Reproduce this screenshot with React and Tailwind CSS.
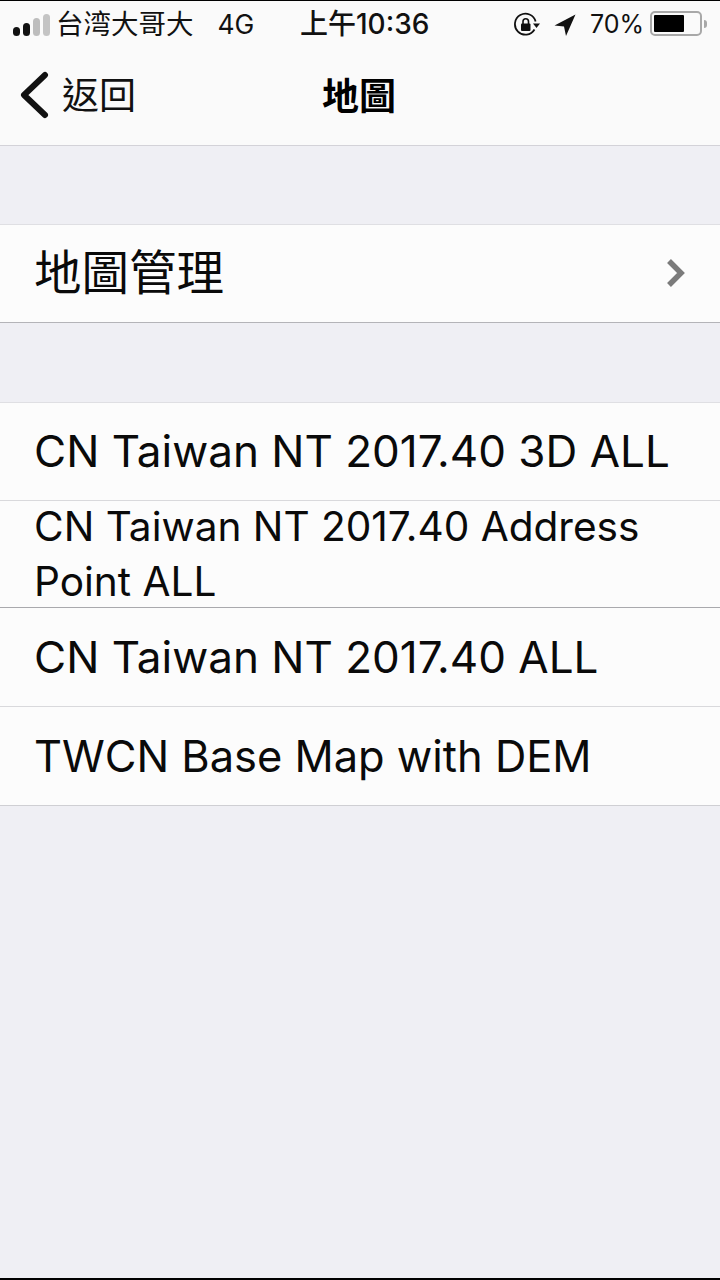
const FONT = 'font-["Inter","Noto_Sans_CJK_TC",sans-serif]';

const Signal = () => (
  <div className="flex items-end gap-[3px]">
    <span className="w-[7px] h-[9px] rounded-full bg-[#111]" />
    <span className="w-[7px] h-[13px] rounded-full bg-[#111]" />
    <span className="w-[7px] h-[18px] rounded-full bg-[#bdbdbd]" />
    <span className="w-[7px] h-[22px] rounded-full bg-[#c4c4c4]" />
  </div>
);

const RotationLock = () => (
  <svg width="27" height="26" viewBox="0 0 27 26" fill="none">
    <path d="M21.5 17.5A10.5 10.5 0 1 1 22.6 9.5" stroke="#111" strokeWidth="1.8" />
    <path d="M20 11.5h7L23.5 16z" fill="#111" />
    <rect x="8" y="11.5" width="9.5" height="7.5" rx="1" fill="#111" />
    <path d="M10 12V9.5a2.7 2.7 0 0 1 5.5 0V12" stroke="#111" strokeWidth="1.6" />
  </svg>
);

const Location = () => (
  <svg width="22" height="22" viewBox="0 0 22 22">
    <path d="M21.5 0.5 0.5 11.5 10 12.5 12 22z" fill="#111" />
  </svg>
);

const Battery = () => (
  <div className="flex items-center -translate-y-[1px]">
    <div className="w-[52px] h-[25px] rounded-[5px] border-2 border-[#a8a8a8] p-[2px]">
      <div className="w-[30px] h-full rounded-[1px] bg-black" />
    </div>
    <span className="ml-[2px] w-[3px] h-[8px] rounded-r-full bg-[#a8a8a8]" />
  </div>
);

const StatusBar = () => (
  <div className="relative h-[47px] flex items-center justify-between pl-[13px] pr-[13px] text-[#111]">
    <div className="flex items-center">
      <Signal />
      <span className="ml-[6px] text-[27.5px] leading-none">台湾大哥大</span>
      <span className="ml-[24px] text-[26.5px] leading-none">4G</span>
    </div>
    <div className="flex items-center">
      <RotationLock />
      <span className="ml-[14px]"><Location /></span>
      <span className="ml-[14px] mr-[6px] text-[25px] leading-none">70%</span>
      <Battery />
    </div>
    <span className="absolute left-[300px] top-[9px] text-[28px] leading-none font-medium">上午10:36</span>
  </div>
);

const NavBar = () => (
  <div className="relative h-[98px] flex items-center justify-center pr-[2px] border-b border-[#d3d2d8]">
    <div className="absolute left-[19px] top-[23px] flex items-center">
      <svg width="30" height="48" viewBox="0 0 30 48" fill="none">
        <path d="M26 4 5 24l21 20" stroke="#111" strokeWidth="6" strokeLinecap="round" strokeLinejoin="round" />
      </svg>
      <span className="ml-[13px] text-[37px] leading-none text-[#111]">返回</span>
    </div>
    <span className="text-[37px] font-bold leading-none text-black">地圖</span>
  </div>
);

const Row = ({ children, className = '' }) => (
  <div className={`flex items-center pl-[34px] border-b text-[#0a0a0a] leading-[55px] ${className}`}>
    {children}
  </div>
);

const App = () => (
  <div className={`w-[720px] h-[1280px] flex flex-col bg-[#efeff4] border-t border-b-2 border-black overflow-hidden ${FONT}`}>
    <div className="bg-[#fafafa]">
      <StatusBar />
      <NavBar />
    </div>

    <div className="mt-[78px] bg-[#fcfcfc] border-t border-[#dfdfe3]">
      <Row className="h-[98px] justify-between pr-[35px] border-[#b4b4b8] text-[47.5px]">
        <span className="-translate-y-[1px]">地圖管理</span>
        <svg width="20" height="30" viewBox="0 0 20 30" fill="none" className="-translate-y-[1px]">
          <path d="M4 3 16 15 4 27" stroke="#7b7b7b" strokeWidth="5.5" strokeLinejoin="miter" />
        </svg>
      </Row>
    </div>

    <div className="mt-[79px] bg-[#fcfcfc] border-t border-[#dfdfe3]">
      <Row className="h-[98px] border-[#d9d9dc] text-[44px]">CN Taiwan NT 2017.40 3D ALL</Row>
      <Row className="h-[107px] border-[#a9a9ad] text-[40.6px]">CN Taiwan NT 2017.40 Address Point ALL</Row>
      <Row className="h-[99px] border-[#d9d9dc] text-[44px]">CN Taiwan NT 2017.40 ALL</Row>
      <Row className="h-[99px] border-[#cfcfd3] text-[43.4px]">TWCN Base Map with DEM</Row>
    </div>
  </div>
);

export default App;
